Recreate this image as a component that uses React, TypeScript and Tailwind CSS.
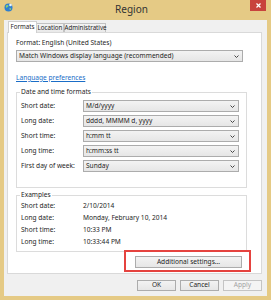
import React from "react";

const font = "font-['Noto_Sans',sans-serif]";

function Chevron() {
  return (
    <svg width="5" height="3" viewBox="0 0 5 3" className="shrink-0">
      <path d="M0.5 0.5 L2.5 2.5 L4.5 0.5" fill="none" stroke="#444" strokeWidth="1" />
    </svg>
  );
}

function Select({ value, className = "" }: { value: string; className?: string }) {
  return (
    <div
      className={`flex h-[12px] items-center justify-between border border-[#acacac] bg-linear-to-b from-[#f3f3f3] to-[#e6e6e6] pl-[2px] pr-[3px] ${className}`}
    >
      <span className="whitespace-nowrap leading-none">{value}</span>
      <Chevron />
    </div>
  );
}

function Button({ label, disabled = false, className = "" }: { label: string; disabled?: boolean; className?: string }) {
  return (
    <div
      className={`flex h-[11px] items-center justify-center border leading-none ${
        disabled
          ? "border-[#c4c4c4] bg-[#f4f4f4] text-[#a3a3a3]"
          : "border-[#acacac] bg-linear-to-b from-[#f3f3f3] to-[#e6e6e6] text-[#1e1e1e]"
      } ${className}`}
    >
      {label}
    </div>
  );
}

function GlobeIcon() {
  return (
    <svg width="9" height="9" viewBox="0 0 9 9">
      <circle cx="4.5" cy="4.5" r="4" fill="#2f7fcf" />
      <path d="M2 2.5 C3 1.5 4.5 2 4.5 3 C4 4 3 4 2.5 5 C2 4.5 1.5 3.5 2 2.5Z" fill="#8fd16a" />
      <path d="M5.5 5 C6.5 4.8 7.5 5.5 7 6.5 C6.3 7.3 5.3 7 5.5 5Z" fill="#8fd16a" />
      <circle cx="6.5" cy="2" r="1.3" fill="#e9f3fb" />
    </svg>
  );
}

const formatRows = [
  ["Short date:", "M/d/yyyy"],
  ["Long date:", "dddd, MMMM d, yyyy"],
  ["Short time:", "h:mm tt"],
  ["Long time:", "h:mm:ss tt"],
  ["First day of week:", "Sunday"],
];

const exampleRows = [
  ["Short date:", "2/10/2014"],
  ["Long date:", "Monday, February 10, 2014"],
  ["Short time:", "10:33 PM"],
  ["Long time:", "10:33:44 PM"],
];

export default function App() {
  return (
    <div className={`flex h-[300px] w-[271px] flex-col bg-[#e5ca85] text-[6.6px] text-[#1e1e1e] ${font}`}>
      {/* title bar */}
      <div className="flex h-[20px] shrink-0 items-start">
        <div className="ml-[4px] mt-[3px]">
          <GlobeIcon />
        </div>
        <div className="flex-1 pt-[3px] text-center text-[10px] leading-[12px] text-[#333]">Region</div>
        <div className="mr-[5px] flex h-[11px] w-[16px] items-center justify-center bg-[#c8433d]">
          <svg width="5" height="5" viewBox="0 0 5 5">
            <path d="M0.5 0.5 L4.5 4.5 M4.5 0.5 L0.5 4.5" stroke="#fff" strokeWidth="1.2" />
          </svg>
        </div>
      </div>

      {/* client area */}
      <div className="mx-[4px] mb-[4px] flex flex-1 flex-col bg-[#f0f0f0] pl-[3px] pr-[5px]">
        {/* tabs */}
        <div className="flex h-[12px] items-end pl-[1px] pt-[1px] text-[6.2px]">
          <div className="relative z-10 -mb-px flex h-[12px] w-[29px] items-center justify-center border border-b-0 border-[#cfcfcf] bg-white leading-none">
            Formats
          </div>
          <div className="flex h-[9px] w-[27px] items-center justify-center border border-b-0 border-l-0 border-[#c2c2c2] bg-linear-to-b from-[#f3f3f3] to-[#e9e9e9] leading-none">
            Location
          </div>
          <div className="flex h-[9px] w-[42px] items-center justify-center border border-b-0 border-[#c2c2c2] bg-linear-to-b from-[#f3f3f3] to-[#e9e9e9] pl-px leading-none">
            Administrative
          </div>
        </div>

        {/* tab panel */}
        <div className="flex h-[242px] flex-col border border-[#d9d9d9] bg-white pb-[4px] pl-[8px] pr-[14px] pt-[5px]">
          <div className="h-[10px] leading-[10px]">Format: English (United States)</div>
          <Select value="Match Windows display language (recommended)" className="mr-[4px] mt-[2px]" />
          <div className="mt-[11px] h-[10px] leading-[10px]">
            <span className="text-[#1a6dc7] underline">Language preferences</span>
          </div>

          <fieldset className="mt-[4px] border border-[#dcdcdc] pb-[15px] pl-[4px] pr-[7px] pt-[3px]">
            <legend className="-ml-[1px] px-[1px] leading-[10px]">Date and time formats</legend>
            <div className="flex flex-col gap-[3px]">
              {formatRows.map(([label, value]) => (
                <div key={label} className="flex items-center">
                  <div className="w-[62px] shrink-0 leading-none">{label}</div>
                  <Select value={value} className="flex-1" />
                </div>
              ))}
            </div>
          </fieldset>

          <fieldset className="mt-[2px] border border-[#dcdcdc] pb-[3px] pl-[4px] pr-[7px]">
            <legend className="-ml-[1px] px-[1px] leading-[10px]">Examples</legend>
            <div className="flex flex-col">
              {exampleRows.map(([label, value]) => (
                <div key={label} className="flex h-[12px] items-center">
                  <div className="w-[62px] shrink-0 leading-none">{label}</div>
                  <div className="leading-none">{value}</div>
                </div>
              ))}
            </div>
          </fieldset>

          <div className="mt-[4px] flex justify-end pr-[5px]">
            <div className="relative">
              <Button label="Additional settings..." className="h-[12px] w-[107px] border-[#9fbcdc]" />
              <div className="absolute -bottom-[4px] -left-[11px] -right-[9px] -top-[6px] border-2 border-[#e5433f]" />
            </div>
          </div>
        </div>

        {/* dialog buttons */}
        <div className="mt-[6px] flex justify-end gap-[4px]">
          <Button label="OK" className="w-[39px]" />
          <Button label="Cancel" className="w-[39px]" />
          <Button label="Apply" disabled className="w-[39px]" />
        </div>
      </div>
    </div>
  );
}
